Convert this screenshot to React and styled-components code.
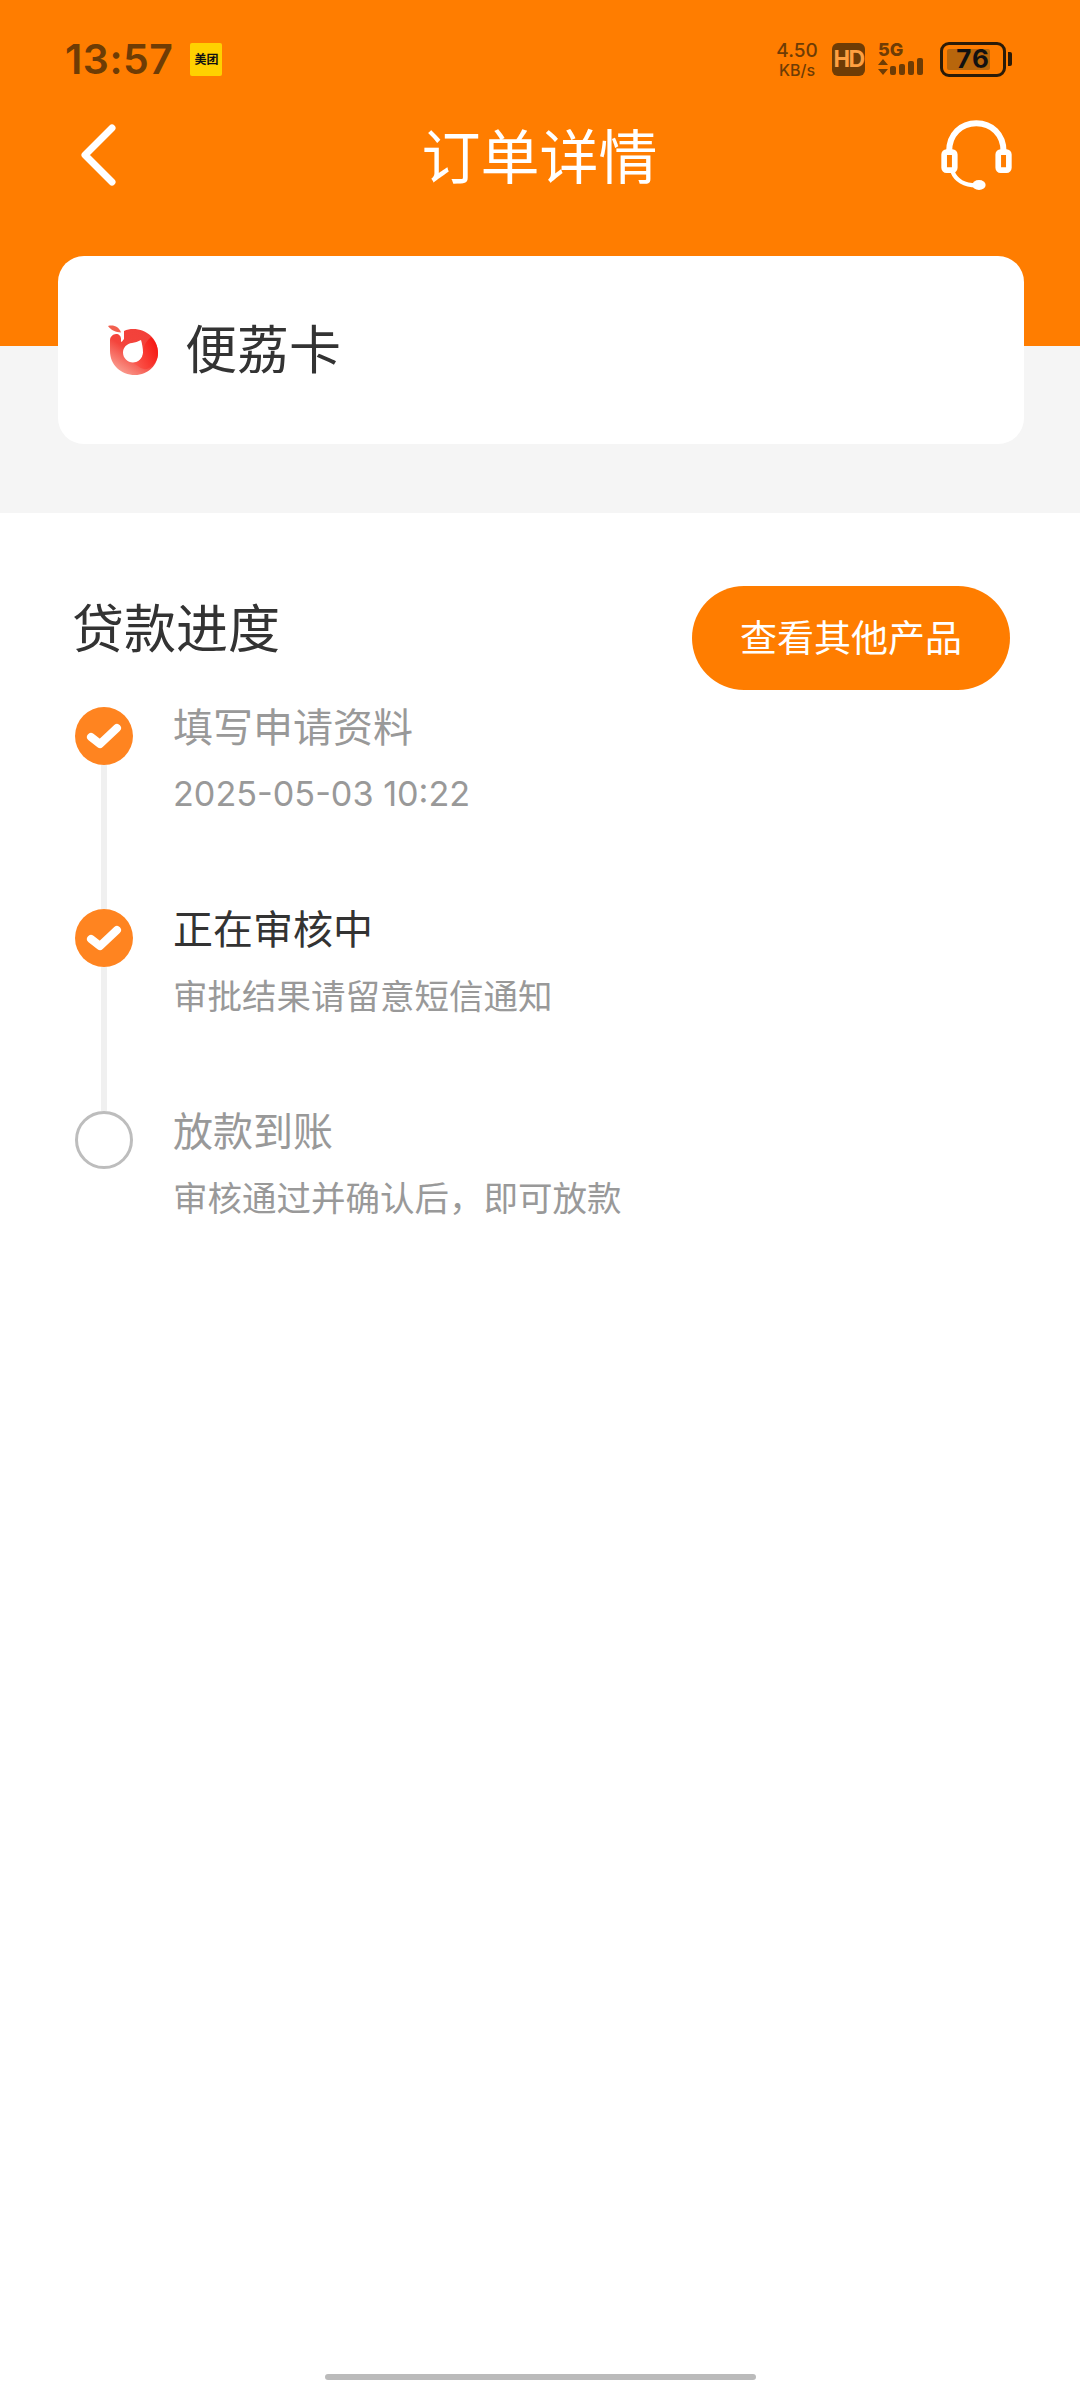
import React from "react";
import styled, { createGlobalStyle } from "styled-components";

const Global = createGlobalStyle`
  html, body { margin: 0; padding: 0; background: #fff; }
  body { font-family: "Noto Sans CJK SC", "Noto Sans", sans-serif; }
  * { box-sizing: border-box; }
`;

const Page = styled.div`
  width: 1080px;
  height: 2388px;
  display: flex;
  flex-direction: column;
  background: #fff;
  overflow: hidden;
`;

const Header = styled.header`
  height: 346px;
  flex: none;
  background: #ff7d00;
  padding-top: 28px;
`;

const StatusBar = styled.div`
  height: 62px;
  display: flex;
  align-items: center;
  justify-content: space-between;
  padding: 0 68px 0 65px;
  color: #6e3c05;
`;

const StatusLeft = styled.div`
  display: flex;
  align-items: center;
  gap: 17px;
`;

const Time = styled.span`
  font-family: Inter, "Liberation Sans", sans-serif;
  font-size: 41px;
  font-weight: 600;
  line-height: 1;
  letter-spacing: 0.5px;
`;

const AppBadge = styled.span`
  width: 32px;
  height: 33px;
  border-radius: 2px;
  background: #ffd100;
  color: #111;
  display: flex;
  align-items: center;
  justify-content: center;
  font-size: 12px;
  font-weight: 700;
  line-height: 1;
  white-space: nowrap;
`;

const StatusRight = styled.div`
  display: flex;
  align-items: center;
`;

const Speed = styled.div`
  width: 46px;
  display: flex;
  flex-direction: column;
  align-items: center;
  font-family: Inter, "Liberation Sans", sans-serif;
  font-weight: 500;
  line-height: 1;
  font-size: 19px;
  margin-right: 12px;
  & > span:last-child { font-size: 16px; margin-top: 2px; }
`;

const HdBadge = styled.span`
  width: 33px;
  height: 33px;
  border-radius: 6px;
  background: #6e3c05;
  color: #ffa040;
  display: flex;
  align-items: center;
  justify-content: center;
  font-family: "Liberation Sans", sans-serif;
  font-size: 23px;
  font-weight: 700;
  letter-spacing: -1.5px;
  margin-right: 13px;
`;

const Signal = styled.div`
  width: 46px;
  height: 34px;
  display: flex;
  flex-direction: column;
  justify-content: space-between;
  margin-right: 16px;
`;

const SignalLabel = styled.span`
  font-family: Inter, "Liberation Sans", sans-serif;
  font-size: 18px;
  font-weight: 800;
  line-height: 15px;
  height: 15px;
`;

const Battery = styled.div`
  width: 66px;
  height: 35px;
  border: 3px solid #2b1b08;
  border-radius: 9px;
  padding: 4px 4px;
  display: flex;
  position: relative;
  color: #111;
`;

const BatteryFill = styled.div`
  width: 82%;
  height: 100%;
  background: #b8660c;
  border-radius: 2px;
`;

const BatteryValue = styled.span`
  position: absolute;
  inset: 0;
  display: flex;
  align-items: center;
  justify-content: center;
  font-family: Inter, "Liberation Sans", sans-serif;
  font-size: 26px;
  font-weight: 700;
  letter-spacing: 1px;
  line-height: 1;
`;

const BatteryTip = styled.span`
  width: 4px;
  height: 14px;
  margin-left: 2px;
  background: #2b1b08;
  border-radius: 0 2px 2px 0;
`;

const Nav = styled.div`
  height: 100px;
  margin-top: 15px;
  display: grid;
  grid-template-columns: 1fr auto 1fr;
  align-items: center;
  padding: 0 66px 0 65px;
  & > svg:first-child { margin-left: 16px; }
  & > svg:last-child { justify-self: end; }
`;

const NavTitle = styled.h1`
  margin: 0 0 3px;
  color: #fff;
  font-size: 59px;
  font-weight: 400;
  line-height: 1;
`;

const GraySection = styled.section`
  height: 167px;
  flex: none;
  background: #f5f5f5;
  padding: 0 56px 0 58px;
`;

const ProductCard = styled.div`
  height: 188px;
  margin-top: -90px;
  background: #fff;
  border-radius: 26px;
  display: flex;
  align-items: center;
  padding-left: 50px;
  gap: 27px;
`;

const ProductName = styled.span`
  font-size: 52px;
  line-height: 1;
  color: #333;
  margin-bottom: 6px;
`;

const Progress = styled.section`
  padding: 73px 70px 0 75px;
`;

const TitleRow = styled.div`
  display: flex;
  justify-content: space-between;
  align-items: flex-start;
  margin-bottom: 17px;
`;

const SectionTitle = styled.h2`
  margin: 0;
  margin-left: -3px;
  font-size: 52px;
  font-weight: 400;
  line-height: 80px;
  color: #333;
`;

const OtherButton = styled.button`
  width: 318px;
  height: 104px;
  border: none;
  border-radius: 52px;
  background: #ff7d00;
  color: #fff;
  font-family: inherit;
  font-size: 37px;
  padding: 0 0 5px;
`;

const Step = styled.div`
  height: 202px;
  display: flex;
  gap: 40px;
`;

const Rail = styled.div`
  width: 58px;
  flex: none;
  display: flex;
  flex-direction: column;
  align-items: center;
`;

const Dot = styled.div`
  width: 58px;
  height: 58px;
  flex: none;
  border-radius: 50%;
  background: ${({ $done }) => ($done ? "#ff8420" : "#fff")};
  border: ${({ $done }) => ($done ? "none" : "3px solid #bdbdbd")};
  display: flex;
  align-items: center;
  justify-content: center;
`;

const RailLine = styled.div`
  width: 6px;
  flex: 1;
  background: #f0f0f0;
`;

const StepBody = styled.div`
  display: flex;
  flex-direction: column;
  margin-top: -3px;
`;

const StepTitle = styled.div`
  font-size: 40px;
  line-height: 42px;
  color: ${({ $active }) => ($active ? "#333" : "#999")};
`;

const StepNote = styled.div`
  margin-top: 25px;
  font-size: 34.5px;
  line-height: 42px;
  color: #999;
`;

const StepDate = styled(StepNote)`
  margin-top: 27px;
  font-family: Inter, "Noto Sans", sans-serif;
  font-size: 34.2px;
`;

const Spacer = styled.div`
  flex: 1;
`;

const HomeBar = styled.div`
  width: 431px;
  height: 6px;
  flex: none;
  margin: 0 auto 8px;
  border-radius: 3px;
  background: #bbb;
`;

const Check = () => (
  <svg width="36" height="28" viewBox="0 0 36 28">
    <path d="M5 15l9 7L31 6" fill="none" stroke="#fff" strokeWidth="8" strokeLinecap="round" strokeLinejoin="round" />
  </svg>
);

const Back = () => (
  <svg width="36" height="62" viewBox="0 0 36 62">
    <path d="M31 4L4 31l27 27" fill="none" stroke="#fff" strokeWidth="7" strokeLinecap="round" strokeLinejoin="round" />
  </svg>
);

const Headset = () => (
  <svg width="75" height="73" viewBox="600 300 225 220">
    <path d="M630 398c0-52 36-85 82-85s82 33 82 85" fill="none" stroke="#fff" strokeWidth="18" />
    <rect x="615" y="400" width="32" height="54" rx="7" fill="none" stroke="#fff" strokeWidth="17" />
    <rect x="778" y="400" width="32" height="54" rx="7" fill="none" stroke="#fff" strokeWidth="17" />
    <path d="M640 458c10 26 36 42 72 42" fill="none" stroke="#fff" strokeWidth="13" />
    <ellipse cx="720" cy="499" rx="20" ry="15" fill="#fff" />
  </svg>
);

const Bars = () => (
  <svg width="46" height="18" viewBox="0 0 46 18" fill="#6e3c05">
    <path d="M0 7l5-6 5 6zM0 11h10l-5 6z" />
    <rect x="12" y="8" width="6" height="9" rx="2" />
    <rect x="21" y="6" width="6" height="11" rx="2" />
    <rect x="30" y="3" width="6" height="14" rx="2" />
    <rect x="39" y="0" width="6" height="17" rx="2" />
  </svg>
);

const Logo = () => (
  <svg width="50" height="50" viewBox="0 0 50 50">
    <defs>
      <linearGradient id="bodyGrad" x1="0.1" y1="1" x2="0.8" y2="0">
        <stop offset="0" stopColor="#fbb0a2" />
        <stop offset="0.5" stopColor="#f4443c" />
        <stop offset="1" stopColor="#f2403a" />
      </linearGradient>
      <linearGradient id="swoopGrad" x1="0" y1="0.8" x2="1" y2="0.2">
        <stop offset="0" stopColor="#fb5a50" />
        <stop offset="1" stopColor="#f5140f" />
      </linearGradient>
    </defs>
    <path d="M0 1c6-1.500 11 1 13 6.500C8 7 3 5.500 0 1z" fill="#f2604f" />
    <path fillRule="evenodd" fill="url(#bodyGrad)" d="M16 6c3-1.500 6-2 9-2 14 0 25 10 25 24 0 12-10 22-23 22C13 50 2 40 2 26V15c0-3 3-6 6-6 3 0 5 2 5 5 0 4 0 4 3 0zM33 15c-3 1.500-6 2.500-9 3-5 .5-9 4.500-9 9.500 0 5.500 4.500 10 10 10 5.500 0 10-4.500 10-10 0-4.500-1-9-2-12.500z" />
    <path d="M35 28c0 5.500-4.500 10-10 10 5 3 9 7 14 6 7-3 11-9 11-16 0-7-3-12-7-16-3 3-8 7-8 16z" fill="url(#swoopGrad)" />
  </svg>
);

const steps = [
  { title: "填写申请资料", date: "2025-05-03 10:22", done: true },
  { title: "正在审核中", note: "审批结果请留意短信通知", done: true, active: true },
  { title: "放款到账", note: "审核通过并确认后，即可放款", last: true },
];

export default function App() {
  return (
    <Page>
      <Global />
      <Header>
        <StatusBar>
          <StatusLeft>
            <Time>13:57</Time>
            <AppBadge>美团</AppBadge>
          </StatusLeft>
          <StatusRight>
            <Speed>
              <span>4.50</span>
              <span>KB/s</span>
            </Speed>
            <HdBadge>HD</HdBadge>
            <Signal>
              <SignalLabel>5G</SignalLabel>
              <Bars />
            </Signal>
            <Battery>
              <BatteryFill />
              <BatteryValue>76</BatteryValue>
            </Battery>
            <BatteryTip />
          </StatusRight>
        </StatusBar>
        <Nav>
          <Back />
          <NavTitle>订单详情</NavTitle>
          <Headset />
        </Nav>
      </Header>
      <GraySection>
        <ProductCard>
          <Logo />
          <ProductName>便荔卡</ProductName>
        </ProductCard>
      </GraySection>
      <Progress>
        <TitleRow>
          <SectionTitle>贷款进度</SectionTitle>
          <OtherButton>查看其他产品</OtherButton>
        </TitleRow>
        {steps.map((s) => (
          <Step key={s.title}>
            <Rail>
              <Dot $done={s.done}>{s.done && <Check />}</Dot>
              {!s.last && <RailLine />}
            </Rail>
            <StepBody>
              <StepTitle $active={s.active}>{s.title}</StepTitle>
              {s.date ? <StepDate>{s.date}</StepDate> : <StepNote>{s.note}</StepNote>}
            </StepBody>
          </Step>
        ))}
      </Progress>
      <Spacer />
      <HomeBar />
    </Page>
  );
}
